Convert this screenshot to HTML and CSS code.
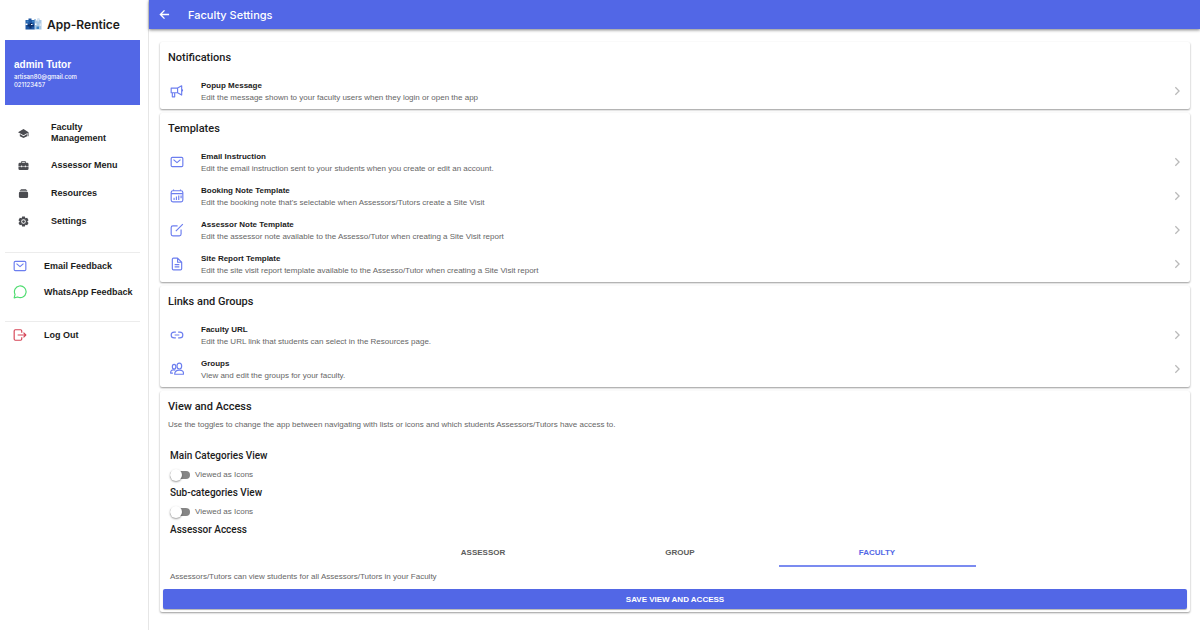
FILE: index.html
```html
<!DOCTYPE html>
<html lang="en">
<head>
    <meta charset="UTF-8">
    <meta name="viewport" content="width=device-width, initial-scale=1.0">
    <title>Faculty Settings | App-Rentice</title>
    <link rel="stylesheet" href="styles.css">
</head>
<body>
    <!-- Icons shared by the page -->
    <svg class="icon-defs" aria-hidden="true">
        <symbol id="icon-mail" viewBox="0 0 24 24">
            <rect x="2" y="4" width="20" height="16" rx="2"/>
            <path d="M6 8l6 5 6-5"/>
        </symbol>
        <symbol id="icon-chevron" viewBox="0 0 24 24">
            <path d="M8 3l9 9-9 9"/>
        </symbol>
    </svg>

    <div class="app">
        <aside class="sidebar">
            <div class="brand">
                <svg class="brand-logo" viewBox="0 0 34 26">
                    <path fill="#a9c8e4" d="M18 3h4v3h3V2h4v3h4v19H18z"/>
                    <path fill="#d5e3f1" d="M25 2h3v6h-3zM29 12h4v5h-4z"/>
                    <path fill="#1d56a3" d="M1 5h6V2h6v3h6v19H1z"/>
                    <path fill="#0d2f66" d="M5 14h5v-3h4v4h4v3h-5v4H9v-4H5z"/>
                    <path fill="#ffffff" d="M1 12h4v3H1zM12 13h3v2h-3zM20 12h3v3h-3z"/>
                    <path fill="#3b82c4" d="M3 6h4v4H3zM14 6h4v4h-4zM23 18h5v5h-5z"/>
                </svg>
                <span>App-Rentice</span>
            </div>

            <div class="profile">
                <h2>admin Tutor</h2>
                <p>artisan80@gmail.com</p>
                <p>021123457</p>
            </div>

            <nav class="menu">
                <a href="#">
                    <svg class="menu-icon" viewBox="0 0 24 24"><path d="M12 2L0 9l12 7 9-5v7h2V9z"/><path d="M4 13v5l8 4 8-4v-5l-8 5z"/></svg>
                    <span>Faculty Management</span>
                </a>
                <a href="#">
                    <svg class="menu-icon" viewBox="0 0 24 24"><path fill-rule="evenodd" d="M7 6V4q0-2 2-2h6q2 0 2 2v2h3q3 0 3 3v4h-6v-1h-2v1H9v-1H7v1H1V9q0-3 3-3zm2 0h6V4H9z"/><path d="M1 14h6v2h2v-2h6v2h2v-2h6v5q0 3-3 3H4q-3 0-3-3z"/></svg>
                    <span>Assessor Menu</span>
                </a>
                <a href="#">
                    <svg class="menu-icon" viewBox="0 0 24 24"><rect x="2" y="8" width="20" height="14" rx="3"/><path d="M4 5h16v2H4zM6 2h12v2H6z"/></svg>
                    <span>Resources</span>
                </a>
                <a href="#">
                    <svg class="menu-icon" viewBox="0 0 24 24"><path fill-rule="evenodd" d="M9 1h6l1 4 4-1 3 5-3 3 3 3-3 5-4-1-1 4H9l-1-4-4 1-3-5 3-3-3-3 3-5 4 1zm3 6a5 5 0 100 10 5 5 0 000-10z"/><circle cx="12" cy="12" r="3"/></svg>
                    <span>Settings</span>
                </a>
            </nav>

            <nav class="menu-small">
                <a href="#">
                    <svg class="line-icon"><use href="#icon-mail"/></svg>
                    <span>Email Feedback</span>
                </a>
                <a href="#">
                    <svg class="line-icon whatsapp" viewBox="0 0 24 24"><path d="M2 22l1.500-6A10 10 0 1 1 8 20.500z"/></svg>
                    <span>WhatsApp Feedback</span>
                </a>
            </nav>

            <nav class="menu-small">
                <a href="#">
                    <svg class="line-icon logout" viewBox="0 0 24 24"><path d="M15 8V5q0-2-2-2H4Q2 3 2 5v14q0 2 2 2h9q2 0 2-2v-3M8 12h14M18 8l4 4-4 4"/></svg>
                    <span>Log Out</span>
                </a>
            </nav>
        </aside>

        <div class="page">
            <header class="toolbar">
                <a href="#" class="back" aria-label="Back">
                    <svg viewBox="0 0 24 24"><path d="M22 12H3M12 3l-9 9 9 9"/></svg>
                </a>
                <h1>Faculty Settings</h1>
            </header>

            <main class="content">
                <section class="card">
                    <h2>Notifications</h2>
                    <a href="#" class="item">
                        <svg class="line-icon" viewBox="0 0 24 24"><path d="M2 7h11v8H2zM13 7l7-4v16l-7-4M20 9q3 2 0 4M4 15v7h4v-7"/></svg>
                        <div class="item-text">
                            <h3>Popup Message</h3>
                            <p>Edit the message shown to your faculty users when they login or open the app</p>
                        </div>
                        <svg class="chevron"><use href="#icon-chevron"/></svg>
                    </a>
                </section>

                <section class="card">
                    <h2>Templates</h2>
                    <a href="#" class="item">
                        <svg class="line-icon"><use href="#icon-mail"/></svg>
                        <div class="item-text">
                            <h3>Email Instruction</h3>
                            <p>Edit the email instruction sent to your students when you create or edit an account.</p>
                        </div>
                        <svg class="chevron"><use href="#icon-chevron"/></svg>
                    </a>
                    <a href="#" class="item">
                        <svg class="line-icon" viewBox="0 0 24 24"><rect x="2" y="3" width="20" height="19" rx="3"/><path d="M2 8h20M6 1v2M18 1v2M7 15v4M11 13v6M15 11v8M19 11v5"/></svg>
                        <div class="item-text">
                            <h3>Booking Note Template</h3>
                            <p>Edit the booking note that's selectable when Assessors/Tutors create a Site Visit</p>
                        </div>
                        <svg class="chevron"><use href="#icon-chevron"/></svg>
                    </a>
                    <a href="#" class="item">
                        <svg class="line-icon" viewBox="0 0 24 24"><path d="M13 5H5Q2 5 2 8v11q0 3 3 3h11q3 0 3-3v-8M10 14L22 2"/></svg>
                        <div class="item-text">
                            <h3>Assessor Note Template</h3>
                            <p>Edit the assessor note available to the Assesso/Tutor when creating a Site Visit report</p>
                        </div>
                        <svg class="chevron"><use href="#icon-chevron"/></svg>
                    </a>
                    <a href="#" class="item">
                        <svg class="line-icon" viewBox="0 0 24 24"><path d="M13 2H6Q4 2 4 4v16q0 2 2 2h12q2 0 2-2V9zM13 2v7h7M8 13h8M8 17h8"/></svg>
                        <div class="item-text">
                            <h3>Site Report Template</h3>
                            <p>Edit the site visit report template available to the Assesso/Tutor when creating a Site Visit report</p>
                        </div>
                        <svg class="chevron"><use href="#icon-chevron"/></svg>
                    </a>
                </section>

                <section class="card">
                    <h2>Links and Groups</h2>
                    <a href="#" class="item">
                        <svg class="line-icon" viewBox="0 0 24 24"><path d="M10 7H7a5 5 0 000 10h3M14 7h3a5 5 0 010 10h-3M8 12h8"/></svg>
                        <div class="item-text">
                            <h3>Faculty URL</h3>
                            <p>Edit the URL link that students can select in the Resources page.</p>
                        </div>
                        <svg class="chevron"><use href="#icon-chevron"/></svg>
                    </a>
                    <a href="#" class="item">
                        <svg class="line-icon" viewBox="0 0 24 24"><ellipse cx="16" cy="7" rx="4" ry="5"/><path d="M8 21q0-7 8-7t7 7zM9 14q-8-2-8 5h4"/><ellipse cx="7" cy="8" rx="3" ry="4"/></svg>
                        <div class="item-text">
                            <h3>Groups</h3>
                            <p>View and edit the groups for your faculty.</p>
                        </div>
                        <svg class="chevron"><use href="#icon-chevron"/></svg>
                    </a>
                </section>

                <section class="card">
                    <h2>View and Access</h2>
                    <p class="intro">Use the toggles to change the app between navigating with lists or icons and which students Assessors/Tutors have access to.</p>

                    <div class="access">
                        <h3>Main Categories View</h3>
                        <label class="toggle">
                            <input type="checkbox" role="switch">
                            <span>Viewed as Icons</span>
                        </label>
                        <h3>Sub-categories View</h3>
                        <label class="toggle">
                            <input type="checkbox" role="switch">
                            <span>Viewed as Icons</span>
                        </label>
                        <h3>Assessor Access</h3>
                        <div class="tabs" role="tablist">
                            <button type="button" role="tab">ASSESSOR</button>
                            <button type="button" role="tab">GROUP</button>
                            <button type="button" role="tab" class="active" aria-selected="true">FACULTY</button>
                        </div>
                        <p class="note">Assessors/Tutors can view students for all Assessors/Tutors in your Faculty</p>
                    </div>
                    <button type="button" class="save">SAVE VIEW AND ACCESS</button>
                </section>
            </main>
        </div>
    </div>
</body>
</html>
```
FILE: styles.css
```css
* {
    box-sizing: border-box;
}

body {
    font-family: 'Liberation Sans', Arial, sans-serif;
    margin: 0;
    background-color: #fff;
    color: #1c1c1c;
}

h1, h2, h3, p {
    margin: 0;
}

a {
    color: inherit;
    text-decoration: none;
}

.icon-defs {
    display: none;
}

.app {
    display: flex;
    min-height: 100vh;
}

/* Sidebar */
.sidebar {
    flex: none;
    width: 149px;
    padding: 8px 8px 0 5px;
    border-right: 1px solid #e6e6e6;
}

.brand {
    display: flex;
    align-items: center;
    justify-content: center;
    gap: 5px;
    height: 32px;
    font-family: 'Inter', sans-serif;
    font-size: 12px;
    font-weight: 600;
}

.brand-logo {
    width: 17px;
    height: 14px;
}

.profile {
    height: 65px;
    padding: 17px 9px 0;
    background-color: #5267e6;
    color: #fff;
}

.profile h2 {
    font-size: 10px;
    line-height: 16px;
}

.profile p {
    font-family: 'Inter', sans-serif;
    font-size: 6px;
    font-weight: 500;
    line-height: 8px;
}

.menu {
    padding: 10px 0 17px;
}

.menu a {
    display: flex;
    align-items: center;
    gap: 22px;
    min-height: 28px;
    padding: 3px 0 3px 13px;
    font-size: 9px;
    font-weight: bold;
    line-height: 11px;
}

.menu a:first-child {
    min-height: 36px;
}

.menu-icon {
    flex: none;
    width: 11px;
    height: 11px;
    fill: #4a4b50;
}

.menu-small {
    padding-bottom: 16px;
    border-top: 1px solid #ececec;
}

.menu-small a {
    display: flex;
    align-items: center;
    gap: 17px;
    height: 26px;
    padding-left: 8px;
    font-size: 9px;
    font-weight: bold;
    white-space: nowrap;
}

.line-icon {
    flex: none;
    width: 14px;
    height: 14px;
    fill: none;
    stroke: #6c7eef;
    stroke-width: 2;
    stroke-linejoin: round;
}

.whatsapp {
    stroke: #4fdc70;
}

.logout {
    stroke: #d64557;
}

/* Page */
.page {
    flex: 1;
    min-width: 0;
}

.toolbar {
    display: flex;
    align-items: center;
    gap: 18px;
    height: 29px;
    padding-left: 10px;
    background-color: #5267e6;
    color: #fff;
    box-shadow: 0 1px 3px rgba(0, 0, 0, 0.5);
}

.toolbar h1 {
    font-family: 'Inter', sans-serif;
    font-size: 11px;
    font-weight: 500;
    line-height: 28px;
}

.back {
    display: flex;
}

.back svg {
    width: 11px;
    height: 11px;
    fill: none;
    stroke: #fff;
    stroke-width: 3;
}

.content {
    display: flex;
    flex-direction: column;
    gap: 4px;
    padding: 13px 10px 16px 11px;
}

.card {
    padding-bottom: 1px;
    border-radius: 2px;
    box-shadow: 0 1px 2px rgba(0, 0, 0, 0.4);
}

.card h2 {
    padding: 4px 8px 0;
    font-family: 'Roboto', sans-serif;
    font-size: 11px;
    font-weight: 500;
    line-height: 24px;
}

.card h2 + .item {
    margin-top: 4px;
}

.item {
    display: flex;
    align-items: center;
    gap: 17px;
    height: 34px;
    padding: 0 8px 0 10px;
}

.item-text {
    flex: 1;
}

.item h3 {
    font-size: 8px;
    line-height: 13px;
}

.item p,
.intro,
.toggle,
.note {
    font-size: 8px;
    line-height: 12px;
    color: #666;
}

.chevron {
    width: 10px;
    height: 10px;
    fill: none;
    stroke: #b9b9b9;
    stroke-width: 3;
}

/* View and Access */
.intro {
    padding: 0 8px 15px;
}

.access {
    padding-left: 10px;
}

.access h3 {
    font-family: 'Roboto', sans-serif;
    font-size: 10px;
    font-weight: 500;
    line-height: 20px;
}

.toggle {
    display: flex;
    align-items: center;
    gap: 5px;
    height: 17px;
}

.toggle input {
    display: flex;
    align-items: center;
    appearance: none;
    width: 20px;
    height: 8px;
    margin: 0;
    border-radius: 4px;
    background-color: #858585;
}

.toggle input::before {
    content: '';
    flex: none;
    width: 12px;
    height: 12px;
    border-radius: 50%;
    background-color: #fff;
    box-shadow: 0 1px 2px rgba(0, 0, 0, 0.4);
}

.toggle input:checked::before {
    margin-left: 8px;
}

.tabs {
    display: flex;
    justify-content: center;
}

.tabs button {
    flex: 0 1 197px;
    height: 27px;
    padding: 0;
    border: none;
    border-bottom: 2px solid transparent;
    background: none;
    color: #5c5c5c;
    font-family: inherit;
    font-size: 8px;
    font-weight: bold;
    cursor: pointer;
}

.tabs .active {
    border-bottom-color: #7b8bf0;
    color: #5267e6;
}

.note {
    padding: 4px 0 6px;
}

.save {
    display: block;
    width: calc(100% - 6px);
    height: 20px;
    margin: 0 3px 2px;
    border: none;
    border-radius: 2px;
    background-color: #5267e6;
    color: #fff;
    font-family: inherit;
    font-size: 8px;
    font-weight: bold;
    box-shadow: 0 1px 1px rgba(0, 0, 0, 0.3);
    cursor: pointer;
}
```
